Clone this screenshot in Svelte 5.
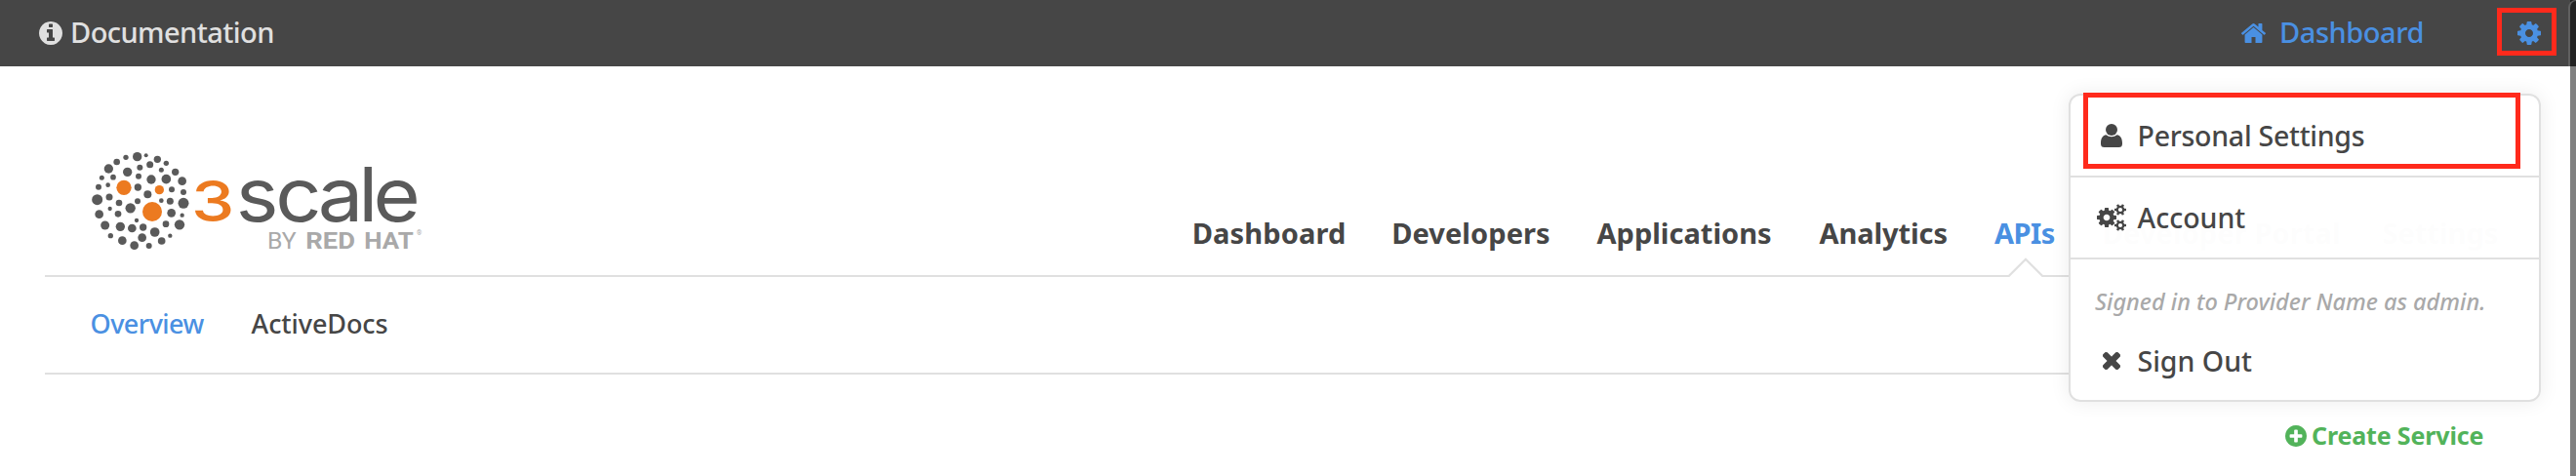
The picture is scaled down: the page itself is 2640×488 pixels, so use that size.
<script>
  const nav = [
    { label: 'Dashboard', tracking: 0.15 },
    { label: 'Developers', tracking: 0.08 },
    { label: 'Applications', tracking: 0 },
    { label: 'Analytics', tracking: -0.1 },
    { label: 'APIs', tracking: -0.5, active: true },
    { label: 'Developer Portal', tracking: 0.1 },
    { label: 'Settings', tracking: 0 }
  ];

  // Logo globe: x, y, radius
  const dots = [
    [182, 62, 14], [209, 58, 6], [147, 64, 8], [119, 78, 10], [244, 70, 11], [271, 82, 8],
    [94, 99, 14], [221, 86, 10.5], [190, 95, 9], [256, 103, 7.5], [299, 109, 11], [152, 109, 14],
    [73, 127, 7.5], [108, 125, 8.5], [186, 122, 9], [225, 132, 14], [271, 131, 14.5], [320, 137, 13],
    [92, 149, 7], [63, 155, 9], [184, 156, 11], [288, 163, 9], [324, 171, 9], [214, 178, 12],
    [59, 194, 16.5], [96, 186, 10.5], [126, 204, 10], [183, 199, 9], [256, 197, 7], [283, 199, 10.5],
    [324, 205, 16.5], [98, 222, 6.5], [161, 220, 15.5], [65, 239, 13], [123, 238, 10], [287, 235, 13],
    [320, 242, 6.5], [180, 258, 6.5], [83, 273, 13.5], [130, 277, 14], [166, 282, 13], [200, 279, 11],
    [270, 269, 10], [312, 271, 15.5], [236, 294, 14.5], [100, 305, 8], [283, 305, 6.5], [197, 311, 13],
    [136, 320, 13], [257, 321, 11.5], [173, 335, 13], [218, 336, 9]
  ];
  const accents = [[141, 157, 23], [250, 164, 14], [228, 231, 30]];

  const disc = 'm640 416q0 209-103 385.5t-279.5 279.5-385.5 103-385.5-103-279.5-279.5-103-385.5 103-385.5 279.5-279.5 385.5-103 385.5 103 279.5 279.5 103 385.5z';
  const info = 'M1152 1376v-160q0-14-9-23t-23-9h-96v-512q0-14-9-23t-23-9h-320q-14 0-23 9t-9 23v160q0 14 9 23t23 9h96v320h-96q-14 0-23 9t-9 23v160q0 14 9 23t23 9h448q14 0 23-9t9-23zm-128-896v-160q0-14-9-23t-23-9h-192q-14 0-23 9t-9 23v160q0 14 9 23t23 9h192q14 0 23-9t9-23z' + disc;
  const plus = 'M1344 960v-128q0-26-19-45t-45-19h-256v-256q0-26-19-45t-45-19h-128q-26 0-45 19t-19 45v256h-256q-26 0-45 19t-19 45v128q0 26 19 45t45 19h256v256q0 26 19 45t45 19h128q26 0 45-19t19-45v-256h256q26 0 45-19t19-45zm320-64' + disc.replace('m640 416', '');
  const home = 'M1472 992v480q0 26-19 45t-45 19h-384v-384h-256v384h-384q-26 0-45-19t-19-45v-480q0-1 .5-3t.5-3l575-474 575 474q1 2 1 6zm223-69l-62 74q-8 9-21 11h-3q-13 0-21-7l-692-577-692 577q-12 8-24 7-13-2-21-11l-62-74q-8-10-7-23.5t11-21.5l719-599q32-26 76-26t76 26l244 204v-195q0-14 9-23t23-9h192q14 0 23 9t9 23v408l219 182q10 8 11 21.5t-7 23.5z';
  const cog = 'M1152 896q0-106-75-181t-181-75-181 75-75 181 75 181 181 75 181-75 75-181zm512-109v222q0 12-8 23t-20 13l-185 28q-19 54-39 91 35 50 107 138 10 12 10 25t-9 23q-27 37-99 108t-94 71q-12 0-26-9l-138-108q-44 23-91 38-16 136-29 186-7 28-36 28h-222q-14 0-24.5-8.5t-11.5-21.5l-28-184q-49-16-90-37l-141 107q-10 9-25 9-14 0-25-11-126-114-165-168-7-10-7-23 0-12 8-23 15-21 51-66.5t54-70.5q-27-50-41-99l-183-27q-13-2-21-12.5t-8-23.5v-222q0-12 8-23t19-13l186-28q14-46 39-92-40-57-107-138-10-12-10-24 0-10 9-23 26-36 98.5-107.5t94.5-71.5q13 0 26 10l138 107q44-23 91-38 16-136 29-186 7-28 36-28h222q14 0 24.5 8.5t11.5 21.5l28 184q49 16 90 37l142-107q9-9 24-9 13 0 25 10 129 119 165 170 7 8 7 22 0 12-8 23-15 21-51 66.5t-54 70.5q26 50 41 98l183 28q13 2 21 12.5t8 23.5z';
  const times = 'M1490 1322q0 40-28 68l-136 136q-28 28-68 28t-68-28l-294-294-294 294q-28 28-68 28t-68-28l-136-136q-28-28-28-68t28-68l294-294-294-294q-28-28-28-68t28-68l136-136q28-28 68-28t68 28l294 294 294-294q28-28 68-28t68 28l136 136q28 28 28 68t-28 68l-294 294 294 294q28 28 28 68z';
  const teeth = [0, 60, 120, 180, 240, 300];
</script>

<div class="page">
  <header class="topbar">
    <a class="docs" href="#docs">
      <svg viewBox="128 128 1536 1536" width="24" height="24"><path d={info} /></svg>
      <span>Documentation</span>
    </a>
    <a class="dash" href="#dashboard">
      <svg viewBox="90 253 1612 1283" width="25" height="20"><path d={home} /></svg>
      <span>Dashboard</span>
    </a>
    <button class="gear" aria-label="Settings">
      <svg viewBox="128 128 1536 1536" width="24" height="24"><path d={cog} /></svg>
    </button>
  </header>

  <main>
    <div class="brand">
      <svg class="logo" viewBox="0 0 1110 390" width="370" height="130">
        {#each dots as [x, y, r]}<circle cx={x} cy={y} {r} fill="#5a5a5a" />{/each}
        {#each accents as [x, y, r]}<circle cx={x} cy={y} {r} fill="#ec7a20" />{/each}
        <text class="three" x="285" y="260" transform="scale(1.22 1)">3</text>
        <text class="scale" x="449 562 683 798 840" y="260" transform="scale(1.08 1)">scale</text>
        <text class="by" x="582" y="345" textLength="89" lengthAdjust="spacingAndGlyphs">BY</text>
        <text class="redhat" x="700" y="345" textLength="152" lengthAdjust="spacingAndGlyphs">RED</text>
        <text class="redhat" x="880" y="345" textLength="151" lengthAdjust="spacingAndGlyphs">HAT</text>
        <text class="reg" x="1041" y="303">®</text>
      </svg>
      <nav class="tabs">
        {#each nav as item}
          <a href="#tab" class:active={item.active} style:letter-spacing="{item.tracking}px">
            {item.label}
            {#if item.active}
              <svg class="notch" viewBox="0 0 40 20" width="40" height="20">
                <path d="M2 20L2.7 19L20 1.8L37.3 19L38 20Z" fill="#fff" />
                <path d="M0 19H2.7L20 1.8L37.3 19H40" fill="none" stroke="#e0e0e0" stroke-width="2.2" />
              </svg>
            {/if}
          </a>
        {/each}
      </nav>
    </div>
    <nav class="subnav">
      <a class="overview" href="#overview">Overview</a>
      <a class="active-docs" href="#activedocs">ActiveDocs</a>
    </nav>
    <a class="create" href="#create">
      <svg viewBox="128 128 1536 1536" width="22" height="22"><path d={plus} /></svg>
      <span>Create Service</span>
    </a>
  </main>

  <div class="edge"></div>

  <div class="menu">
    <a class="item" href="#personal">
      <i><svg viewBox="0 0 22 24" width="22" height="24">
        <circle cx="11" cy="6" r="6" />
        <path d="M5.4 11.2C2.2 11.6 0 14.5 0 19.5V20.5Q0 24 3.5 24H18.5Q22 24 22 20.5V19.5C22 14.5 19.800 11.600 16.600 11.200Q14.200 13.300 11 13.300Q7.800 13.300 5.400 11.200Z" />
      </svg></i>
      <span class="personal">Personal Settings</span>
    </a>
    <a class="item" href="#account">
      <i><svg viewBox="0 0 30 28" width="30" height="28">
        <svg x="0" y="4" width="20" height="20" viewBox="128 128 1536 1536"><path d={cog} /></svg>
        {#each [6, 22] as cy}
          <g transform="translate(24 {cy})">
            <circle r="3.2" fill="none" stroke="#464646" stroke-width="2.2" />
            {#each teeth as a}<rect x="-1.200" y="-6" width="2.400" height="2.700" transform="rotate({a + 30})" />{/each}
          </g>
        {/each}
      </svg></i>
      <span>Account</span>
    </a>
    <div class="session">
      <em>Signed in to Provider Name as admin.</em>
      <a class="item" href="#signout">
        <i><svg viewBox="302 366 1188 1188" width="18" height="18"><path d={times} stroke="#464646" stroke-width="50" /></svg></i>
        <span>Sign Out</span>
      </a>
    </div>
  </div>

  <div class="mark mark-gear"></div>
  <div class="mark mark-personal"></div>
</div>

<style>
  :global(body) { background: #fff; }
  .page {
    position: relative;
    width: 2640px;
    height: 488px;
    overflow: hidden;
    background: #fff;
    color: #464646;
    font: 500 29px/36px "Noto Sans", sans-serif;
  }
  .page * { box-sizing: border-box; }
  a { color: inherit; text-decoration: none; white-space: nowrap; }
  svg { display: block; fill: currentColor; flex: none; }

  .topbar {
    display: flex;
    align-items: center;
    height: 68px;
    padding: 0 36px 0 40px;
    background: #464646;
    color: #4a90e2;
  }
  .topbar a { display: flex; align-items: center; }
  .topbar span { margin-top: -2px; }
  .docs { gap: 8px; color: #e0e0e0; letter-spacing: -.56px; }
  .dash { gap: 14px; margin-left: auto; width: 283px; letter-spacing: -.45px; }
  .gear { padding: 0; border: 0; background: none; color: inherit; }

  main { padding: 0 46px; }
  .brand {
    display: flex;
    height: 216px;
    border-bottom: 2px solid #e0e0e0;
  }
  .logo { margin: 72px 771.700px 0 34px; }
  .three { font: 500 174px Inter, sans-serif; fill: #ec7a20; }
  .scale { font: 400 230px Inter, sans-serif; fill: #5a5a5a; }
  .by { font: 400 73px Roboto, sans-serif; fill: #a9a9a9; }
  .redhat { font: 700 73px Roboto, sans-serif; fill: #a9a9a9; }
  .reg { font: 400 20px Roboto, sans-serif; fill: #a9a9a9; }

  .tabs {
    display: grid;
    grid-template-columns: 204.500px 210.300px 228px 179.500px 110.700px 286.800px 100px;
    height: 216px;
    padding-top: 153px;
    font-weight: 700;
  }
  .tabs a { position: relative; }
  .tabs .active { color: #4a90e2; }
  .notch { position: absolute; left: 12px; top: 43px; }

  .subnav {
    display: grid;
    grid-template-columns: 165px 1fr;
    align-items: center;
    height: 100px;
    padding: 0 0 3px 46.600px;
    border-bottom: 2px solid #e0e0e0;
    font-size: 27px;
  }
  .overview { color: #4a90e2; letter-spacing: -.57px; }
  .active-docs { letter-spacing: -.1px; }

  .create {
    display: flex;
    align-items: center;
    gap: 5px;
    height: 40px;
    margin-top: 43px;
    padding-left: 2296px;
    color: #52b35a;
    font-size: 25px;
    font-weight: 700;
    letter-spacing: -.15px;
  }
  .create span { margin-top: -3px; }

  .edge {
    position: absolute;
    top: 0;
    right: 0;
    width: 6px;
    height: 488px;
    background: linear-gradient(#222 68px, #808080 68px);
  }
  .edge::before {
    content: "";
    position: absolute;
    inset: 0 0 420px -2px;
    border-left: 2px solid #606060;
    border-top: 1px solid #606060;
    border-top-left-radius: 8px;
    background: #222;
  }

  .menu {
    position: absolute;
    left: 2120px;
    top: 96px;
    width: 484px;
    height: 316px;
    border: 2px solid #e0e0e0;
    border-radius: 12px;
    background: rgba(255, 255, 255, .99);
    box-shadow: 0 0 20px rgba(0, 0, 0, .08);
    font-size: 28.500px;
  }
  .item { display: flex; align-items: center; height: 82px; }
  .menu > .item { height: 84px; border-bottom: 2px solid #e0e0e0; }
  .item i { display: flex; justify-content: center; width: 84px; margin-right: -15.500px; }
  .personal { letter-spacing: -.26px; }
  .session em {
    display: block;
    margin: 28px 0 16px 25px;
    color: #a9a9a9;
    font-size: 23.500px;
    line-height: 30px;
  }
  .session .item { height: 60px; }

  .mark { position: absolute; border: 5px solid #ff2a1c; }
  .mark-gear { left: 2559px; top: 8px; width: 61px; height: 49px; }
  .mark-personal { left: 2135px; top: 95px; width: 448px; height: 78px; }
</style>
